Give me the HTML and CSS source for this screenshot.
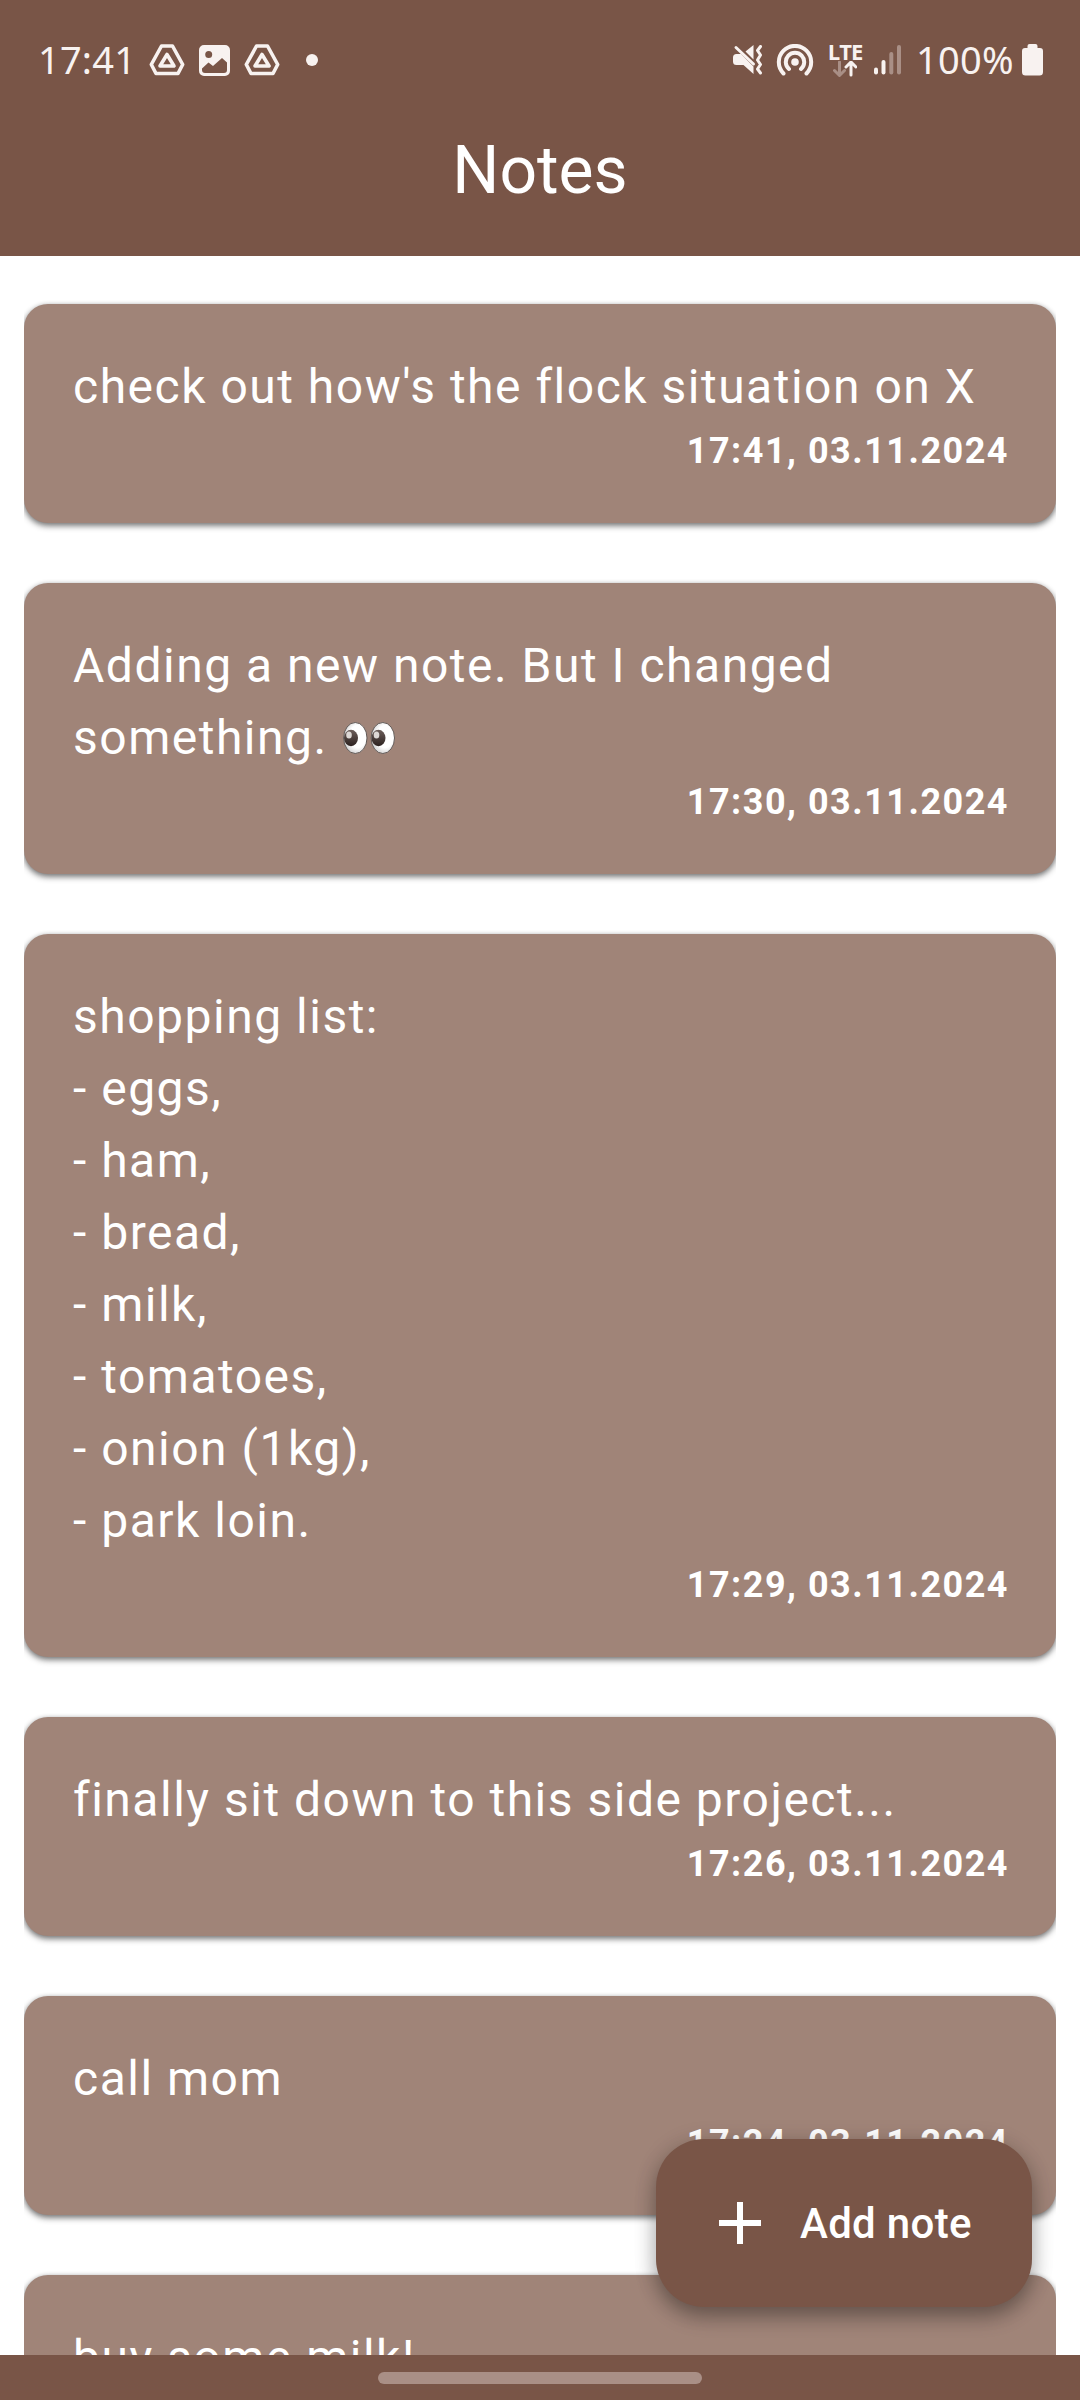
FILE: index.html
```html
<!DOCTYPE html>
<html lang="en">
<head>
<meta charset="utf-8">
<title>Notes</title>
<link rel="stylesheet" href="styles.css">
</head>
<body>
<div class="screen">
  <header class="app-bar">
    <div class="status">
      <span class="clock">17:41</span>
      <svg class="drive" width="36" height="32" viewBox="0 0 36 32"><path d="M12.500 2h11L33.700 20.500 29 29.500H7L2.300 20.500z"/><path d="M18 10.500 25 22H11z"/></svg>
      <svg class="photo" width="31" height="31" viewBox="0 0 31 31"><path fill-rule="evenodd" d="M5 0h21a5 5 0 0 1 5 5v21a5 5 0 0 1-5 5H5a5 5 0 0 1-5-5V5a5 5 0 0 1 5-5zM3 23.500V25a3 3 0 0 0 3 3h19a3 3 0 0 0 3-3v-7.500l-5-4.500-9 8-4.500-3.500zM9.700 6a3.500 3.500 0 1 0 0 7 3.500 3.500 0 0 0 0-7z"/></svg>
      <svg class="drive" width="36" height="32" viewBox="0 0 36 32"><path d="M12.500 2h11L33.700 20.500 29 29.500H7L2.300 20.500z"/><path d="M18 10.500 25 22H11z"/></svg>
      <span class="dot"></span>
      <div class="indicators">
        <svg class="mute" width="30" height="30" viewBox="0 0 30 30"><path d="M3.500 9H8l12.500 12.500V29L10.500 20h-7A3.500 3.500 0 0 1 0 16.500v-4A3.500 3.500 0 0 1 3.500 9zM12.500 6.500 20.500 0v14.500z"/><path class="line" d="M3 2.500 20.500 19"/><path class="line" d="M27.500 1.500 24.500 5.500l3 4.500-3 5 3 4.500-3 4.500 3 4"/></svg>
        <svg class="hotspot" width="38" height="32" viewBox="0 0 38 32"><circle cx="19" cy="18" r="3.800"/><path class="line" d="M7.500 29.500a16.200 16.200 0 1 1 23 0M13 25a9.200 9.200 0 1 1 12 0"/></svg>
        <span class="network">
          <span class="lte">LTE</span>
          <svg width="24" height="16" viewBox="0 0 24 16"><path class="line faded" d="M6.500 1v13M1.500 9.500l5 5 5-5"/><path class="line" d="M18 14V1.500M13 6l5-5 5 5"/></svg>
        </span>
        <svg class="signal" width="27" height="30" viewBox="0 0 27 30"><rect x="0" y="22.500" width="4" height="7" rx="2"/><rect x="7.500" y="15" width="4" height="14.500" rx="2"/><rect class="dim" x="15.300" y="7" width="4" height="22.500" rx="2"/><rect class="dim" x="23" y="0" width="4" height="29.500" rx="2"/></svg>
        <span class="percent">100%</span>
        <svg class="battery" width="21" height="32" viewBox="0 0 21 32"><path d="M7.500 0h6a2 2 0 0 1 2 2v2H18a3 3 0 0 1 3 3v21a3.500 3.500 0 0 1-3.500 3.500h-14A3.500 3.500 0 0 1 0 28V7a3 3 0 0 1 3-3h2.500V2a2 2 0 0 1 2-2z"/></svg>
      </div>
    </div>
    <h1 class="title">Notes</h1>
  </header>

  <main class="notes">
    <article class="note"><p class="text">check out how's the flock situation on X</p><time class="date">17:41, 03.11.2024</time></article>
    <article class="note"><p class="text">Adding a new note. But I changed something. <svg class="eyes" role="img" aria-label="eyes" width="54" height="34" viewBox="0 0 54 34"><defs><radialGradient id="white" cx=".6" cy=".45" r=".6"><stop offset=".6" stop-color="#fff"/><stop offset="1" stop-color="#d2d2d2"/></radialGradient><linearGradient id="iris" x2="0" y2="1"><stop offset="0" stop-color="#6d5f5b"/><stop offset="1" stop-color="#2c211f"/></linearGradient></defs><g id="eye"><ellipse cx="13.300" cy="17" rx="11.700" ry="15.500" fill="url(#white)" stroke="#625a57"/><ellipse cx="9" cy="17" rx="7" ry="8.200" fill="url(#iris)"/><ellipse cx="7" cy="14" rx="2.800" ry="3.500" fill="#ddd8d5"/></g><use href="#eye" x="27.500"/></svg></p><time class="date">17:30, 03.11.2024</time></article>
    <article class="note"><p class="text">shopping list:<br>- eggs,<br>- ham,<br>- bread,<br>- milk,<br>- tomatoes,<br>- onion (1kg),<br>- park loin.</p><time class="date">17:29, 03.11.2024</time></article>
    <article class="note"><p class="text">finally sit down to this side project...</p><time class="date">17:26, 03.11.2024</time></article>
    <article class="note"><p class="text">call mom</p><time class="date">17:24, 03.11.2024</time></article>
    <article class="note"><p class="text">buy some milk!</p></article>
  </main>

  <button class="add" type="button">
    <svg width="42" height="42" viewBox="0 0 42 42"><path d="M18 0h6v18h18v6H24v18h-6V24H0v-6h18z"/></svg>
    <span>Add note</span>
  </button>

  <footer class="nav-bar"><span class="handle"></span></footer>
</div>
</body>
</html>
```

FILE: styles.css
```css
* { box-sizing: border-box; }

body { margin: 0; background: #fff; font-family: Roboto, sans-serif; color: #fff; }

.screen {
  position: relative;
  display: flex;
  flex-direction: column;
  width: 1080px;
  height: 2400px;
  overflow: hidden;
}

.app-bar { flex: none; height: 256px; background: #795547; }

.status {
  display: flex;
  align-items: center;
  height: 120px;
  padding: 0 37px 0 38px;
  color: #f8f2f0;
  font-family: "Noto Sans", sans-serif;
  font-size: 38px;
}
.status svg { flex: none; fill: #f8f2f0; }
.status .line { fill: none; stroke: #f8f2f0; stroke-width: 3; stroke-linecap: round; stroke-linejoin: round; }
.status .hotspot .line { stroke-width: 4; }
.status .faded { stroke: #a98f86; }
.status .dim { fill: #a98f86; }
.clock, .percent { padding-bottom: 2px; }
.clock { width: 111px; letter-spacing: .2px; }
.status .drive { fill: none; stroke: #f8f2f0; stroke-width: 3.6; stroke-linejoin: round; }
.photo { margin: 0 14px 0 14px; }
.dot { width: 12px; height: 12px; margin-left: 26px; border-radius: 50%; background: #f8f2f0; }

.indicators { display: flex; align-items: center; margin-left: auto; }
.hotspot { margin-left: 13px; }
.network { display: flex; flex-direction: column; align-items: center; width: 34px; margin-left: 14px; }
.lte { margin-bottom: 2px; font: 700 22px/15px "Open Sans", sans-serif; letter-spacing: -1px; }
.signal { margin-left: 12px; }
.percent { width: 106px; margin-left: 15px; letter-spacing: .3px; }

.title { margin: 0; padding-top: 12px; font-size: 66px; font-weight: 400; line-height: 78px; text-align: center; }

.notes {
  flex: 1;
  display: flex;
  flex-direction: column;
  gap: 60px;
  min-height: 0;
  margin: 0 24px;
  padding-top: 48px;
  overflow: hidden;
}
.note {
  flex: none;
  display: flex;
  flex-direction: column;
  padding: 47px 47px 49px 49px;
  border-radius: 24px;
  background: #a08478;
  box-shadow: 0 3px 6px rgba(0, 0, 0, .45), 0 1px 5px rgba(0, 0, 0, .2);
}
.text { margin: 0; font-size: 48px; line-height: 72px; letter-spacing: 1.5px; }
.eyes { margin-left: 1px; vertical-align: -1px; }
.date { height: 51px; font-size: 36px; font-weight: 700; line-height: 56px; letter-spacing: 1.5px; text-align: right; }

.add {
  position: absolute;
  right: 48px;
  bottom: 93px;
  display: flex;
  align-items: center;
  gap: 39px;
  width: 376px;
  height: 168px;
  padding: 0 0 0 63px;
  border: 0;
  border-radius: 48px;
  background: #795547;
  box-shadow: 0 10px 20px rgba(0, 0, 0, .3), 0 3px 24px rgba(0, 0, 0, .12);
  color: #fff;
  font: 500 42px/48px Roboto, sans-serif;
  letter-spacing: .3px;
}
.add svg { fill: #fff; }
.add span { padding-top: 2px; }

.nav-bar { flex: none; height: 45px; padding-top: 17px; background: #795547; }
.handle { display: block; width: 324px; height: 12px; margin: 0 auto; border-radius: 6px; background: #a98f86; }
```
